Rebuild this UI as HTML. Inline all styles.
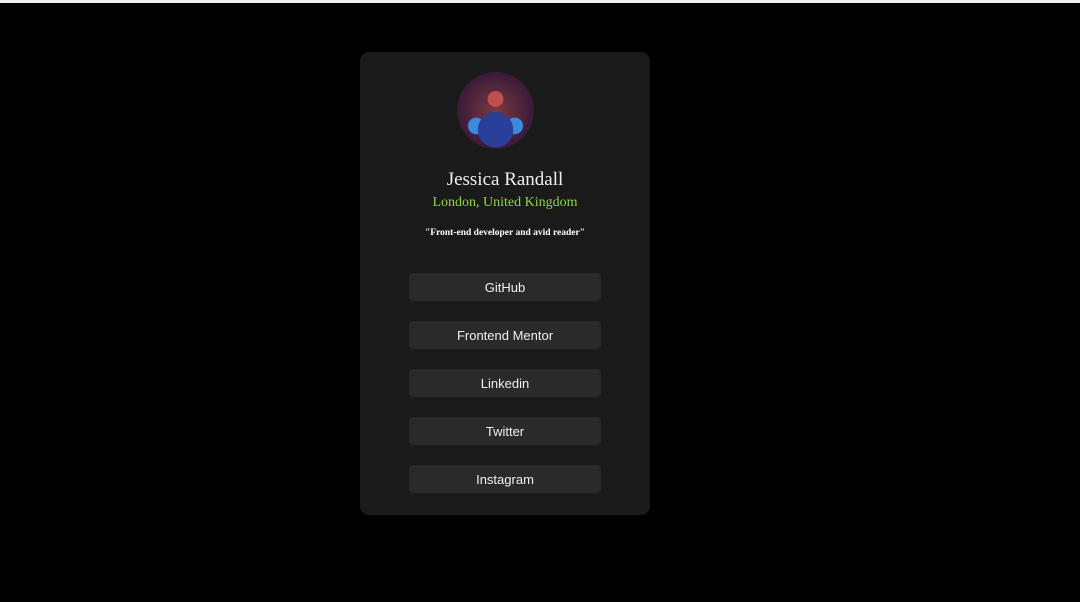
<!DOCTYPE html>
<html><head><style>
html,body{margin:0;padding:0;background:#000;width:1080px;height:602px;overflow:hidden}
.top{position:absolute;left:0;top:0;width:1080px;height:3px;background:#f2f2f2}
.card{position:absolute;left:360px;top:52px;width:290px;height:463px;background:#1a1a1a;border-radius:9px}
.av{position:absolute;left:457px;top:72px;width:77px;height:77px;border-radius:50%;
background:radial-gradient(circle at 50% 35%,#c0504a 0 12%,transparent 13%),radial-gradient(circle at 50% 75%,#2a3f9a 0 25%,transparent 26%),radial-gradient(circle at 25% 70%,#3a8ae0 0 10%,transparent 11%),radial-gradient(circle at 75% 70%,#3a8ae0 0 10%,transparent 11%),radial-gradient(circle at 50% 50%,#7a3a40,#3a1a3a 70%,#1a1530)}
.t{position:absolute;left:360px;width:290px;text-align:center;font-family:"Liberation Serif",serif}
.name{top:169px;font-size:19px;color:#f0f0f0}
.loc{top:195px;font-size:14px;color:#8ed64a}
.q{top:228px;font-size:9.5px;font-weight:bold;color:#fff}
.b{position:absolute;left:409px;width:192px;height:28px;background:#2a2a2a;border-radius:4px;color:#f0f0f0;font:13px "Liberation Sans",sans-serif;text-align:center;line-height:29px}
</style></head><body>
<div class="top"></div>
<div class="card"></div>
<div class="av"></div>
<div class="t name">Jessica Randall</div>
<div class="t loc">London, United Kingdom</div>
<div class="t q">"Front-end developer and avid reader"</div>
<div class="b" style="top:273px">GitHub</div>
<div class="b" style="top:321px">Frontend Mentor</div>
<div class="b" style="top:369px">Linkedin</div>
<div class="b" style="top:417px">Twitter</div>
<div class="b" style="top:465px">Instagram</div>
</body></html>
